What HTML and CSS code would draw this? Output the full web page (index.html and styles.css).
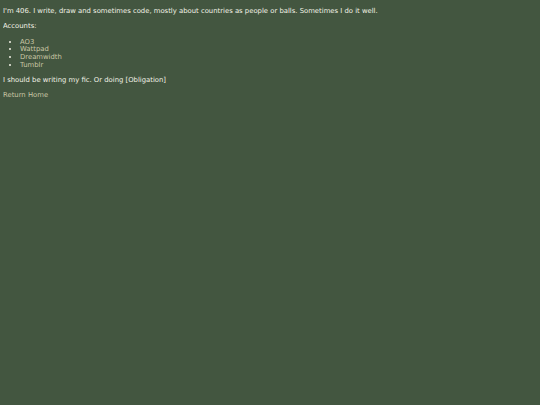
FILE: index.html
```html
<!DOCTYPE html>
<html>
<head>
<meta charset="utf-8">
<link rel="stylesheet" href="styles.css">
</head>
<body>
<p>I'm 406. I write, draw and sometimes code, mostly about countries as people or balls. Sometimes I do it well.</p>
<p>Accounts:</p>
<ul>
<li><a href="#">AO3</a></li>
<li><a href="#">Wattpad</a></li>
<li><a href="#">Dreamwidth</a></li>
<li><a href="#">Tumblr</a></li>
</ul>
<p>I should be writing my fic. Or doing [Obligation]</p>
<p><a href="#">Return Home</a></p>
</body>
</html>
```
FILE: styles.css
```css
html { background: #435640; }
body {
  margin: 0 3px;
  padding-top: 1px;
  font-family: "DejaVu Sans", Verdana, sans-serif;
  font-size: 6.85px;
  line-height: 7.8px;
  color: #f2f2e6;
}
p { margin: 7px 0; }
ul { margin: 8px 0 7px; padding-left: 17px; }
a { color: #c9c7a6; text-decoration: none; }
```
